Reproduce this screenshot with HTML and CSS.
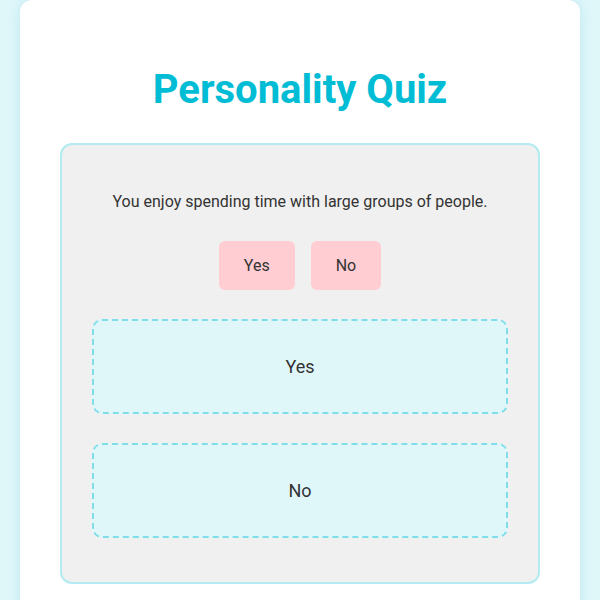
FILE: index.html
```html
<!DOCTYPE html>
<html lang="en">
<head>
  <meta charset="UTF-8" />
  <meta name="viewport" content="width=device-width, initial-scale=1.0"/>
  <title>Personality Quiz</title>
  <link rel="stylesheet" href="styles.css">
</head>
<body>

<div class="quiz-wrapper">
  <h1>Personality Quiz</h1>

  <div class="quiz-box">
    <p class="question">You enjoy spending time with large groups of people.</p>

    <div class="answers">
      <button class="answer" draggable="true">Yes</button>
      <button class="answer" draggable="true">No</button>
    </div>

    <div class="drop-zone">Yes</div>
    <div class="drop-zone">No</div>
  </div>
</div>

</body>
</html>
```

FILE: styles.css
```css
body {
  margin: 0;
  padding: 0 20px;
  background-color: #e0f7fa;
  font-family: Roboto, 'Liberation Sans', sans-serif;
  color: #333;
}

.quiz-wrapper {
  background: #ffffff;
  border-radius: 12px;
  box-shadow: 0 0 15px rgba(0, 150, 170, 0.15);
  padding: 40px 40px 60px;
  min-height: 600px;
}

h1 {
  margin: 26px 0 30px;
  text-align: center;
  color: #00bcd4;
  font-size: 40px;
  font-weight: bold;
}

.quiz-box {
  background: #f0f0f0;
  border: 2px solid #b2ebf2;
  border-radius: 12px;
  padding: 30px 30px 44px;
}

.question {
  margin: 17px 0 30px;
  text-align: center;
  font-size: 16px;
}

.answers {
  display: flex;
  justify-content: center;
  gap: 16px;
  margin-bottom: 29px;
}

.answer {
  background: #ffcdd2;
  border: none;
  border-radius: 6px;
  padding: 15px 25px;
  font-family: inherit;
  font-size: 16px;
  color: #333;
  cursor: grab;
}

.drop-zone {
  height: 91px;
  display: flex;
  align-items: center;
  justify-content: center;
  background: #e0f7fa;
  border: 2px dashed #80deea;
  border-radius: 10px;
  font-size: 18px;
  margin-bottom: 29px;
}

.drop-zone:last-child {
  margin-bottom: 0;
}
```
